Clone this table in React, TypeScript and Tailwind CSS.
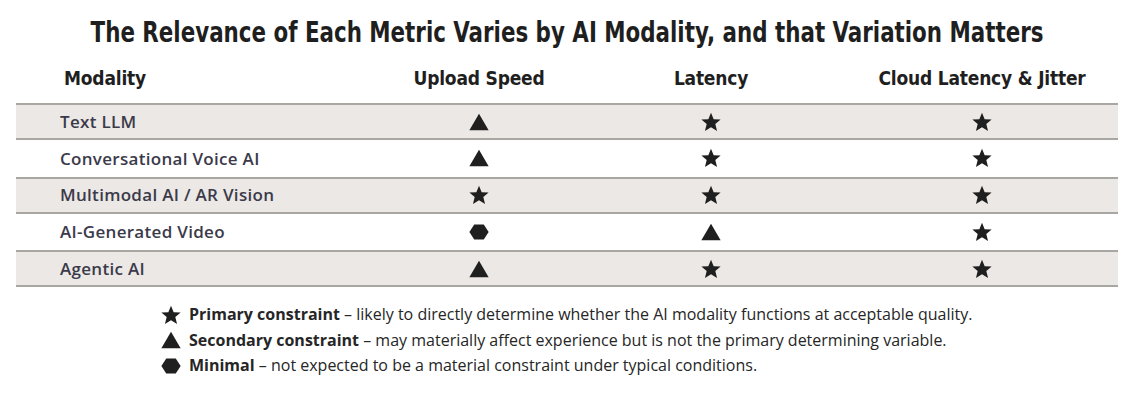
import React from "react";

type Mark = "star" | "tri" | "hex";

const rows: { name: string; marks: Mark[] }[] = [
    { name: "Text LLM", marks: ["tri", "star", "star"] },
    { name: "Conversational Voice AI", marks: ["tri", "star", "star"] },
    { name: "Multimodal AI / AR Vision", marks: ["star", "star", "star"] },
    { name: "AI-Generated Video", marks: ["hex", "tri", "star"] },
    { name: "Agentic AI", marks: ["tri", "star", "star"] },
];

const condensed = { fontFamily: '"DejaVu Sans Condensed", "Liberation Sans", sans-serif' };
const body = { fontFamily: '"Open Sans", "Noto Sans", sans-serif' };

function Icon({ kind, size = 22 }: { kind: Mark; size?: number }) {
    if (kind === "star") {
        return (
            <svg width={size} height={size} viewBox="0 0 24 24" className="fill-[#1f1f1f] shrink-0">
                <path d="M12 1.8l2.9 7.1 7.6.5-5.8 4.9 1.9 7.4L12 17.6l-6.6 4.1 1.9-7.4-5.8-4.9 7.6-.5z" />
            </svg>
        );
    }
    if (kind === "tri") {
        return (
            <svg width={size} height={size} viewBox="0 0 24 24" className="fill-[#1f1f1f] shrink-0">
                <path d="M12 3L22.5 21H1.5z" />
            </svg>
        );
    }
    return (
        <svg width={size} height={size} viewBox="0 0 24 24" className="fill-[#1f1f1f] shrink-0">
            <path d="M6.8 3.8h10.4L22.5 12l-5.3 8.2H6.8L1.5 12z" />
        </svg>
    );
}

export default function App() {
    return (
        <main className="w-[1134px] h-[406px] bg-white text-[#1f1f1f] overflow-hidden">
            <div className="flex justify-center pt-[17px]">
                <h1 className="inline-block whitespace-nowrap text-[29px] font-bold leading-[30px] scale-x-[0.82]" style={condensed}>
                    The Relevance of Each Metric Varies by AI Modality, and that Variation Matters
                </h1>
            </div>

            <div className="mx-[16px] mt-[6px]">
                <div className="grid grid-cols-[347px_232px_232px_1fr] h-[50px] items-center text-[19px] font-bold tracking-[-0.2px]" style={condensed}>
                    <div className="pl-[48px]">Modality</div>
                    <div className="text-center">Upload Speed</div>
                    <div className="text-center">Latency</div>
                    <div className="text-center pl-[19px]">Cloud Latency &amp; Jitter</div>
                </div>

                <div>
                    {rows.map((r, i) => (
                        <div
                            key={r.name}
                            className={
                                i % 2 === 0
                                    ? "grid grid-cols-[347px_232px_232px_1fr] items-center h-[37px] box-border border-y-2 border-[#aaa7a3] bg-[#ece8e5]"
                                    : "grid grid-cols-[347px_232px_232px_1fr] items-center h-[36.5px]"
                            }
                        >
                            <div className="pl-[44px] text-[17px] font-semibold text-[#3b3a4a] tracking-[0.3px]" style={body}>
                                {r.name}
                            </div>
                            {r.marks.map((m, j) => (
                                <div key={j} className={j === 2 ? "flex justify-center pl-[19px]" : "flex justify-center"}>
                                    <Icon kind={m} />
                                </div>
                            ))}
                        </div>
                    ))}
                </div>
            </div>

            <ul className="mt-[15px] pl-[160px] flex flex-col text-[16px] leading-[25.5px] text-[#262626]" style={body}>
                <li className="flex items-center gap-[7px]">
                    <Icon kind="star" />
                    <span>
                        <b className="font-bold">Primary constraint</b> – likely to directly determine whether the AI modality functions at acceptable quality.
                    </span>
                </li>
                <li className="flex items-center gap-[7px]">
                    <Icon kind="tri" />
                    <span>
                        <b className="font-bold">Secondary constraint</b> – may materially affect experience but is not the primary determining variable.
                    </span>
                </li>
                <li className="flex items-center gap-[7px]">
                    <Icon kind="hex" />
                    <span>
                        <b className="font-bold">Minimal</b> – not expected to be a material constraint under typical conditions.
                    </span>
                </li>
            </ul>
        </main>
    );
}
